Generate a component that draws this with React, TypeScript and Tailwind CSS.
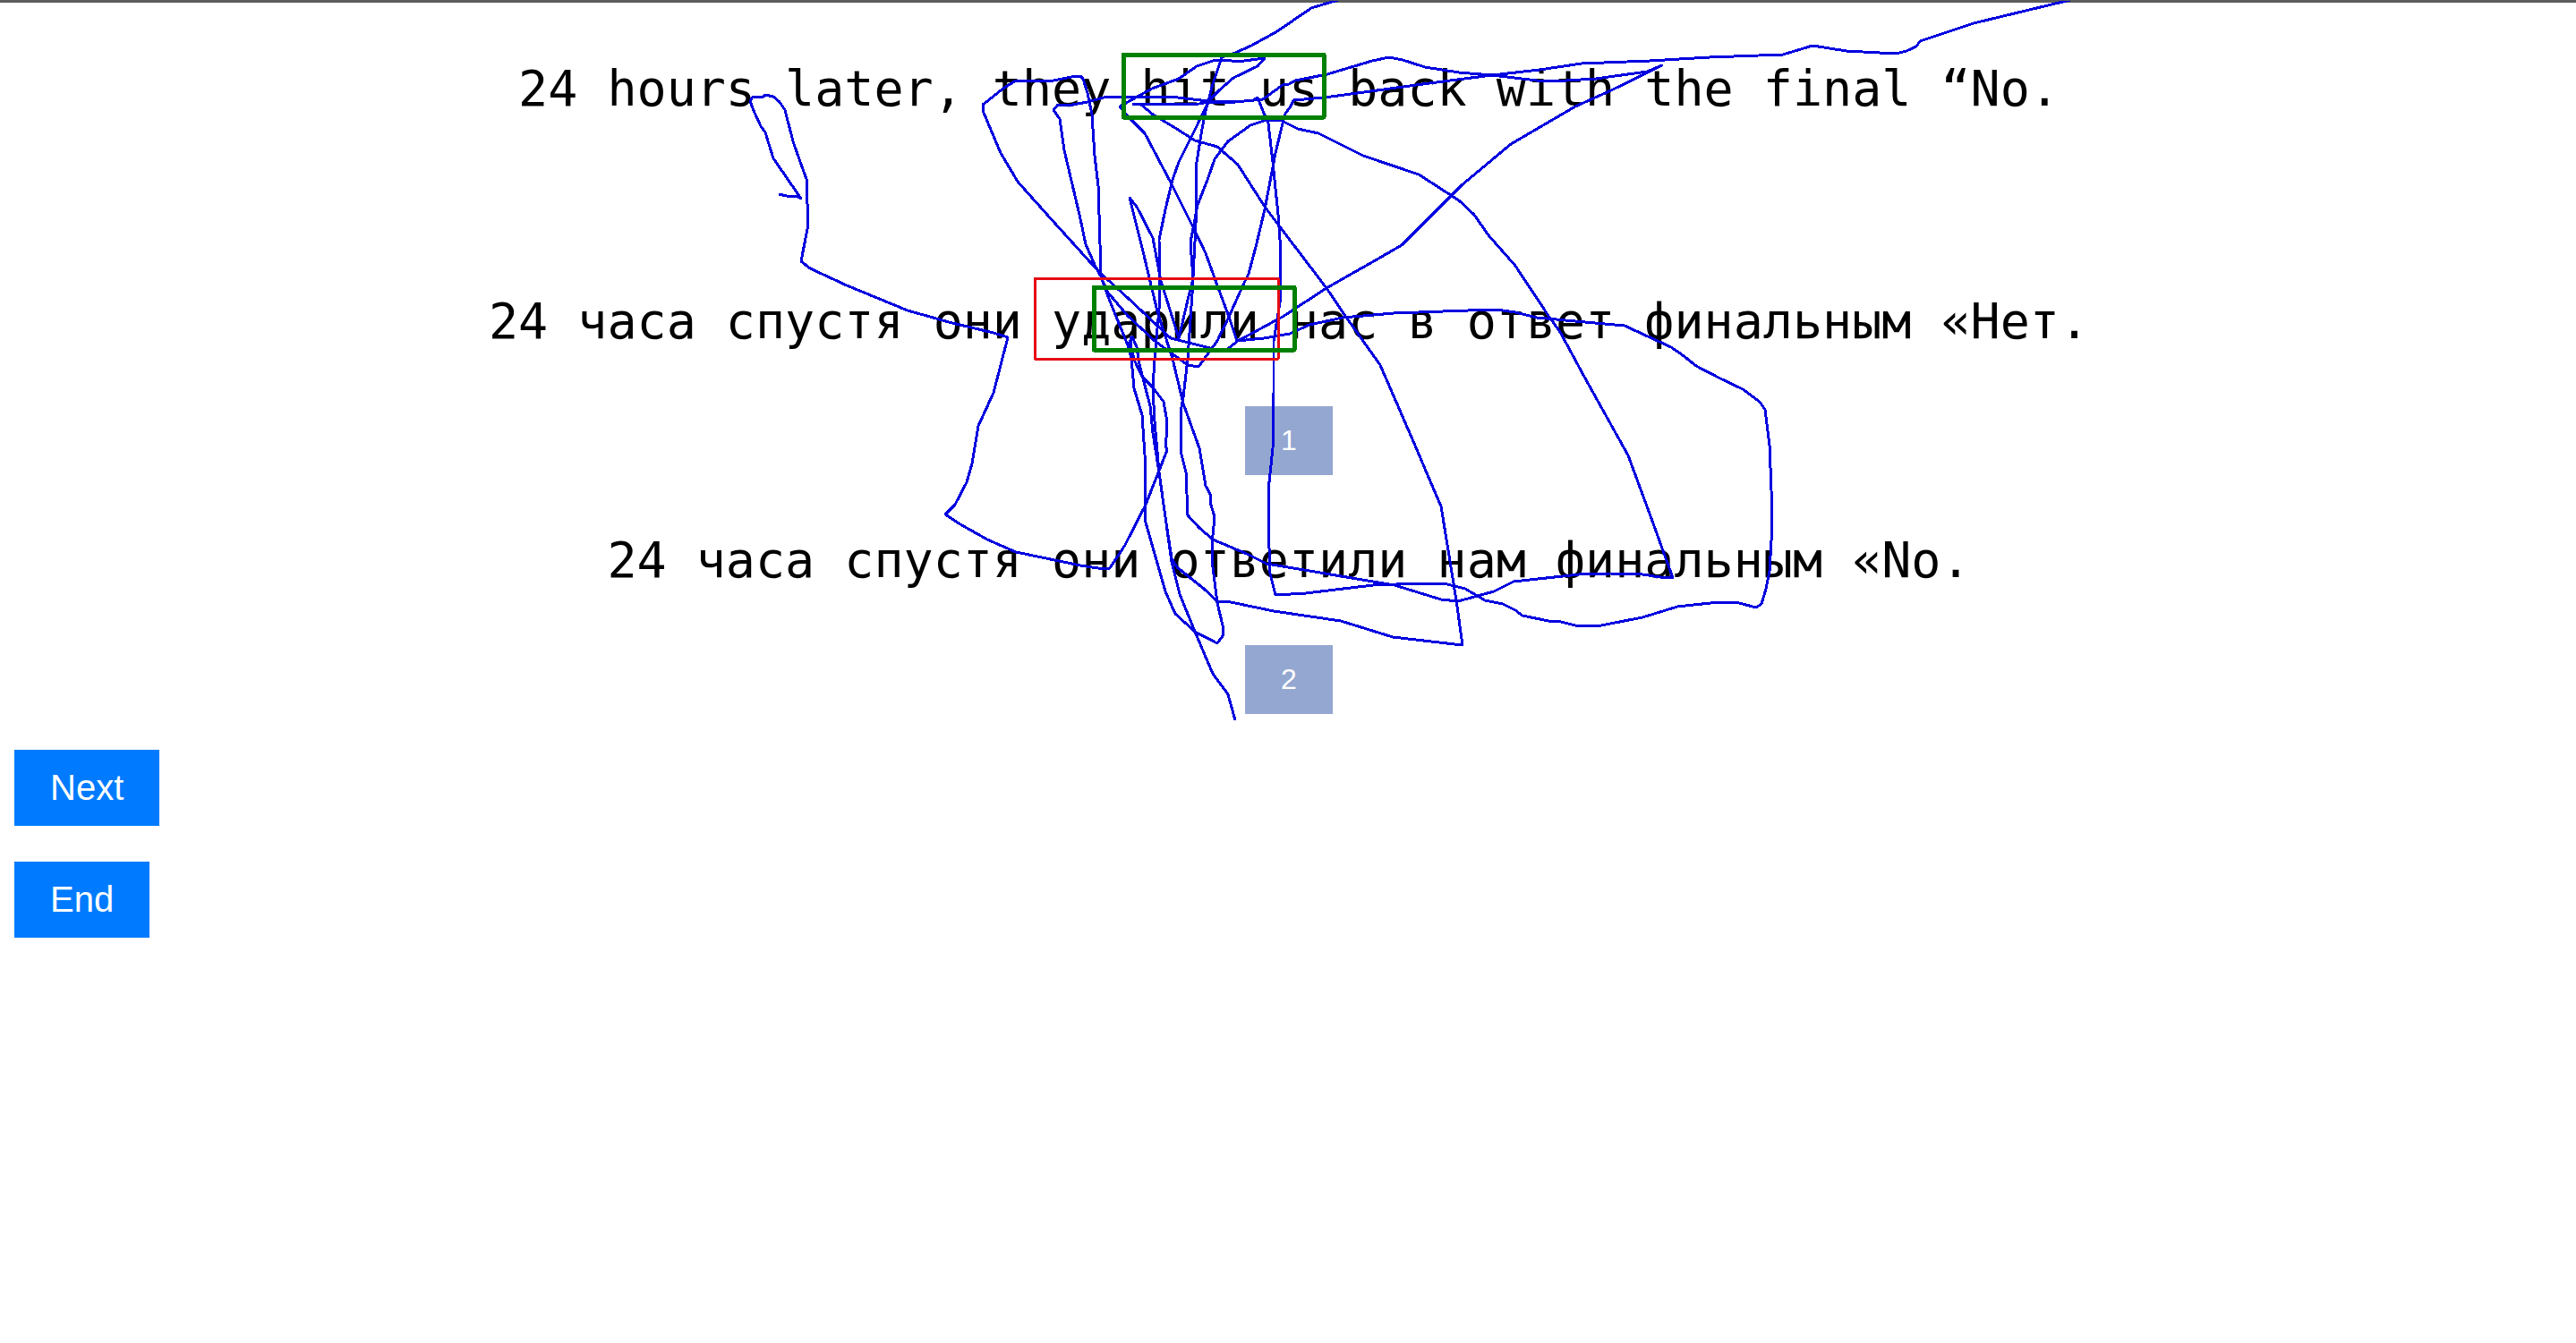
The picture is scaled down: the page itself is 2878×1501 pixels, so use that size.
const gazeTraces = [
  "870,216 879,218 891,219 895,221 884,205 864,176 855,147 850,140 843,125 838,112 841,107 853,107 855,105 864,107 871,113 877,122 886,157 893,177 901,199 902,227 902,255 895,291 905,299 946,318 1014,346 1046,355 1060,359 1110,371 1126,376 1110,438 1093,475 1086,517 1080,538 1067,563 1056,574 1073,585 1103,602 1135,616 1207,631 1227,634 1240,634 1257,608 1280,563 1304,502 1302,497 1304,480 1303,465 1300,448 1288,432 1276,420 1268,403 1263,387 1264,375",
  "1260,385 1237,328 1230,308 1229,272 1228,239 1227,207 1223,173 1220,127 1215,103 1210,87 1207,84 1202,84 1177,89 1135,89 1122,97 1098,116 1099,125 1118,170 1137,202 1170,239 1227,302 1260,332 1308,377 1352,388 1368,392 1383,380 1433,353 1482,321 1540,288 1566,273 1600,239 1633,206 1688,160 1760,118 1800,100 1845,78 1857,72 1840,79 1783,87 1750,89 1717,89 1667,83 1630,80 1592,74 1567,66 1552,63 1533,67 1483,82 1447,89 1440,93 1433,94 1411,110 1380,113 1350,112 1307,107 1237,107 1215,113 1193,117 1182,116 1177,122 1184,132 1189,167 1206,239 1213,272 1223,295 1230,308 1237,325 1260,352 1290,380 1327,407 1339,409 1360,380 1373,353 1390,315 1395,305 1403,275 1413,233 1425,170 1433,137 1436,126 1442,118 1445,111 1480,108 1597,92 1667,83 1720,77 1767,70 1843,67 1910,63 1992,60 2025,50 2063,56 2118,59 2130,56 2141,51 2145,45 2205,25 2263,11 2313,-1",
  "1350,112 1362,100 1378,86 1405,73 1413,64 1382,68 1370,66 1355,67 1337,73 1317,87 1287,98 1260,113 1251,118 1258,127 1279,148 1308,203 1333,253 1347,282 1360,318 1373,353 1382,380 1412,377 1441,372 1463,362 1500,354 1557,349 1640,346 1672,345 1693,348 1717,354 1760,358 1815,363 1867,387 1880,396 1895,408 1920,421 1947,434 1966,448 1972,457 1977,497 1979,547 1980,587 1977,637 1973,657 1968,674 1962,678 1943,673 1920,672 1874,677 1835,689 1789,698 1760,698 1744,694 1730,693 1701,687 1693,681 1679,674 1659,670 1637,657 1617,652 1586,651 1534,653 1459,662 1425,664 1419,640 1417,583 1417,547 1422,500 1423,438 1423,380 1430,337 1430,267 1428,239 1422,180 1417,137 1411,123 1405,108 1400,111 1380,113 1350,113 1340,115 1293,116 1265,115",
  "1275,116 1288,127 1313,142 1335,156 1360,163 1383,183 1413,230 1428,250 1482,321 1503,352 1542,407 1578,490 1610,565 1619,620 1627,670 1634,720 1625,719 1556,711 1498,693 1423,682 1375,672 1360,671 1345,657 1315,633 1309,623 1302,577 1295,527 1288,483 1285,453 1273,406 1270,387 1265,375 1260,385 1264,400 1267,433 1276,463 1279,507 1280,583 1302,660 1313,685 1335,705 1360,718 1366,710 1367,702 1360,673 1355,633 1354,607 1357,577 1352,560 1353,553 1347,542 1340,500 1322,450 1310,400 1293,347 1277,280 1262,220 1270,230 1288,265 1297,313 1317,377 1328,330 1333,310 1330,270 1338,228 1349,200 1357,177 1372,157 1397,139 1415,133 1430,133 1450,143 1473,148 1523,173 1585,194 1630,223 1647,239 1663,262 1693,296 1730,352 1743,370 1770,420 1819,508 1843,573 1869,645 1855,644 1835,641 1799,640 1764,641 1691,649 1669,660 1629,671 1610,669 1558,653 1415,629 1393,618 1355,602 1340,589 1327,575 1325,527 1319,503 1319,460 1322,443 1327,400 1332,327 1336,250 1337,180 1343,143 1347,123 1355,93 1365,63 1380,58 1398,50 1427,34 1465,8 1495,-1",
  "1350,113 1337,140 1317,180 1310,200 1302,233 1295,267 1296,333 1290,400 1288,433 1290,470 1295,527 1309,627 1318,663 1335,705 1355,752 1372,775 1380,804",
];

function Sentence({ children }: { children: string }) {
  return (
    <p className="text-center font-['DejaVu_Sans_Mono',monospace] text-[55px] leading-[70px] text-black">
      {children}
    </p>
  );
}

function ChoiceButton({ label }: { label: string }) {
  return (
    <button type="button" className="bg-[#93a7d1] px-10 py-5 text-[32px] leading-[37px] text-white">
      {label}
    </button>
  );
}

function ActionButton({ label }: { label: string }) {
  return (
    <button type="button" className="bg-[#007bff] px-10 py-5 text-[40px] leading-[45px] text-white">
      {label}
    </button>
  );
}

function GazeOverlay() {
  return (
    <svg
      viewBox="0 0 2878 1501"
      className="pointer-events-none absolute inset-x-0 top-0 w-full"
      fill="none"
      strokeLinejoin="round"
      shapeRendering="crispEdges"
      aria-hidden="true"
    >
      <g stroke="#0000e0" strokeWidth="3">
        {gazeTraces.map((points) => (
          <polyline key={points} points={points} />
        ))}
      </g>
      <rect x="1156" y="310" width="272" height="90" stroke="#e60c14" strokeWidth="3" />
      <g stroke="#008000" strokeWidth="5">
        <rect x="1255" y="60" width="224" height="70" />
        <rect x="1222" y="320" width="224" height="70" />
      </g>
    </svg>
  );
}

export default function App() {
  return (
    <main className="relative min-h-screen border-t-[3px] border-[#5c5c5c] bg-white font-['Liberation_Sans',Arial,sans-serif]">
      <div className="flex flex-col items-center pt-[61px] pl-0.5">
        <Sentence>24 hours later, they hit us back with the final “No.</Sentence>
        <div className="mt-[190px] flex flex-col items-center gap-[60px]">
          <Sentence>24 часа спустя они ударили нас в ответ финальным «Нет.</Sentence>
          <ChoiceButton label="1" />
          <Sentence>24 часа спустя они ответили нам финальным «No.</Sentence>
          <ChoiceButton label="2" />
        </div>
      </div>
      <div className="flex flex-col items-start gap-10 px-4 pt-10">
        <ActionButton label="Next" />
        <ActionButton label="End" />
      </div>
      <div className="absolute inset-x-0 -top-[2px]">
        <GazeOverlay />
      </div>
    </main>
  );
}
